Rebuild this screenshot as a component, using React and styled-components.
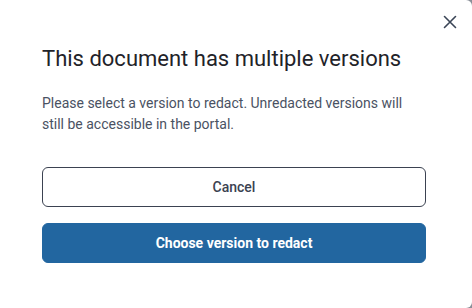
import styled, { createGlobalStyle } from 'styled-components';

const GlobalStyle = createGlobalStyle`
  html, body {
    margin: 0;
    padding: 0;
    background: #8a8f98;
  }
  body {
    font-family: Roboto, "Liberation Sans", sans-serif;
  }
`;

const Modal = styled.div`
  position: relative;
  box-sizing: border-box;
  width: 472px;
  height: 308px;
  background: #ffffff;
  border-radius: 0 6px 6px 0;
  padding: 45px 46px 0 42px;
`;

const CloseButton = styled.button`
  position: absolute;
  top: 14px;
  right: 14px;
  width: 16px;
  height: 16px;
  padding: 0;
  border: none;
  background: none;
  cursor: pointer;
  display: flex;
  align-items: center;
  justify-content: center;
`;

const Title = styled.h2`
  margin: 0;
  font-size: 22px;
  font-weight: 400;
  line-height: 28px;
  color: #1f2329;
`;

const Description = styled.p`
  margin: 20px 0 0;
  font-size: 14px;
  line-height: 21px;
  color: #4a5263;
`;

const Actions = styled.div`
  display: flex;
  flex-direction: column;
  gap: 16px;
  margin-top: 32px;
`;

const Button = styled.button`
  box-sizing: border-box;
  width: 100%;
  height: 40px;
  border-radius: 6px;
  font-family: Roboto, "Liberation Sans", sans-serif;
  font-size: 14px;
  cursor: pointer;
  border: 1px solid ${(p) => (p.$primary ? '#2266a0' : '#3b4251')};
  background: ${(p) => (p.$primary ? '#2266a0' : '#ffffff')};
  color: ${(p) => (p.$primary ? '#ffffff' : '#3b4251')};
  font-weight: ${(p) => (p.$primary ? 700 : 500)};
`;

const App = () => {
  return (
    <>
      <GlobalStyle />
      <Modal>
        <CloseButton aria-label="Close">
          <svg width="14" height="14" viewBox="0 0 14 14">
            <path d="M1.5 1.5 L12.5 12.5 M12.5 1.5 L1.5 12.5" stroke="#3a4556" strokeWidth="1.6" strokeLinecap="round" />
          </svg>
        </CloseButton>
        <Title>This document has multiple versions</Title>
        <Description>
          Please select a version to redact. Unredacted versions will still be accessible in the portal.
        </Description>
        <Actions>
          <Button>Cancel</Button>
          <Button $primary>Choose version to redact</Button>
        </Actions>
      </Modal>
    </>
  );
};

export default App;
